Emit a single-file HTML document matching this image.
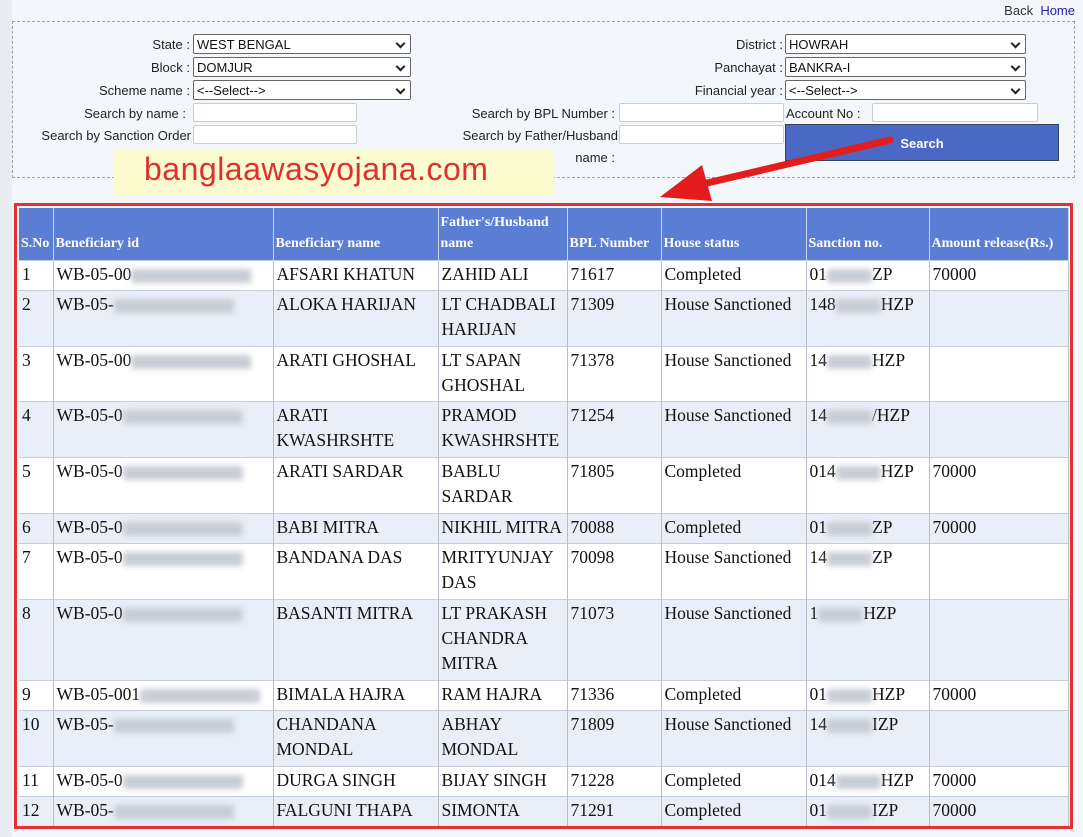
<!DOCTYPE html>
<html><head><meta charset="utf-8"><style>
html,body{margin:0;width:1083px;height:837px;overflow:hidden}
body{background:#f3f6fa;font-family:"Liberation Sans",sans-serif;position:relative}
.a{position:absolute}
.lbl{position:absolute;font-size:13px;color:#222;text-align:right}
.sel{position:absolute;height:20px;border:1px solid #666;border-radius:2px;background:#fff;font-size:13px;line-height:20px;padding-left:3px;box-sizing:border-box;color:#111}
.sel:after{content:"";position:absolute;right:6px;top:5px;width:5px;height:5px;border-right:2px solid #222;border-bottom:2px solid #222;transform:rotate(45deg)}
.inp{position:absolute;height:19px;border:1px solid #ccc;border-radius:2px;background:#fff;box-sizing:border-box}
.wrap{position:absolute;left:0;top:0;width:1083px;height:829px;overflow:hidden}
table{position:absolute;left:19px;top:208px;width:1049px;border-collapse:collapse;font-family:"Liberation Serif",serif;font-size:17.5px;color:#111;table-layout:fixed}
th{background:#5a7ed4;color:#fff;font-family:"Liberation Serif",serif;font-size:14px;font-weight:bold;text-align:left;vertical-align:bottom;padding:0 2px 6px 2px;border-right:1px solid #c8d4ee;height:46px;line-height:21px}
td{vertical-align:top;padding:1px 3px 0 3px;line-height:25px;border-right:1px solid #bbc;border-top:1px solid #c6ccd8;box-sizing:border-box}
tr.o td{background:#fff}
tr.e td{background:#e9eff8}
.bl{display:inline-block;width:120px;height:14px;background:#c8cdd4;filter:blur(3px);vertical-align:middle}
.bs{display:inline-block;width:45px;height:14px;background:#c8cdd4;filter:blur(3px);vertical-align:middle}
</style></head><body>
<div class="a" style="left:0;top:0;width:12px;height:837px;background:#e9ecf0"></div>
<div class="a" style="right:8px;top:3px;font-size:13px"><span style="color:#333">Back</span>&nbsp; <span style="color:#22a">Home</span></div>
<div class="a" style="left:12px;top:21px;width:1063px;height:157px;border:1px dashed #9aa;box-sizing:border-box"></div>
<div class="lbl" style="right:893px;top:37px">State :</div>
<div class="sel" style="left:193px;top:34px;width:218px">WEST BENGAL</div>
<div class="lbl" style="right:893px;top:60px">Block :</div>
<div class="sel" style="left:193px;top:57px;width:218px">DOMJUR</div>
<div class="lbl" style="right:893px;top:83px">Scheme name :</div>
<div class="sel" style="left:193px;top:80px;width:218px">&lt;--Select--&gt;</div>
<div class="lbl" style="right:897px;top:106px">Search by name :</div>
<div class="inp" style="left:193px;top:103px;width:164px"></div>
<div class="lbl" style="right:892px;top:128px">Search by Sanction Order</div>
<div class="inp" style="left:193px;top:125px;width:164px"></div>
<div class="lbl" style="right:300px;top:37px">District :</div>
<div class="sel" style="left:785px;top:34px;width:241px">HOWRAH</div>
<div class="lbl" style="right:300px;top:60px">Panchayat :</div>
<div class="sel" style="left:785px;top:57px;width:241px">BANKRA-I</div>
<div class="lbl" style="right:300px;top:83px">Financial year :</div>
<div class="sel" style="left:785px;top:80px;width:241px">&lt;--Select--&gt;</div>
<div class="lbl" style="right:468px;top:106px">Search by BPL Number :</div>
<div class="inp" style="left:619px;top:103px;width:165px"></div>
<div class="lbl" style="left:786px;top:106px;text-align:left">Account No :</div>
<div class="inp" style="left:872px;top:103px;width:166px"></div>
<div class="lbl" style="right:465px;top:128px">Search by Father/Husband</div>
<div class="inp" style="left:619px;top:125px;width:165px"></div>
<div class="lbl" style="right:468px;top:150px">name :</div>
<div class="a" style="left:785px;top:124px;width:274px;height:37px;background:#4a68c4;border:1px solid #345;box-sizing:border-box;color:#fff;font-weight:bold;font-size:13px;text-align:center;line-height:37px">Search</div>
<div class="a" style="left:114px;top:150px;width:440px;height:46px;background:#fdfbd0"></div>
<div class="a" style="left:144px;top:151px;font-size:32px;color:#e0302e;letter-spacing:0.5px">banglaawasyojana.com</div>
<svg class="a" style="left:650px;top:135px" width="245" height="70"><line x1="240" y1="5" x2="40" y2="52" stroke="#e51c1c" stroke-width="7" stroke-linecap="round"/><polygon points="10,62 52,30 62,66" fill="#e51c1c"/></svg>
<div class="wrap">
<table>
<colgroup><col style="width:34px"><col style="width:220px"><col style="width:165px"><col style="width:129px"><col style="width:94px"><col style="width:145px"><col style="width:123px"><col style="width:139px"></colgroup>
<tr><th>S.No</th><th>Beneficiary id</th><th>Beneficiary name</th><th>Father's/Husband name</th><th>BPL Number</th><th>House status</th><th>Sanction no.</th><th>Amount release(Rs.)</th></tr>
<tr class="o" style="height:30px"><td>1</td><td>WB-05-00<span class="bl"></span></td><td>AFSARI KHATUN</td><td>ZAHID ALI</td><td>71617</td><td>Completed</td><td>01<span class="bs"></span>ZP</td><td>70000</td></tr>
<tr class="e" style="height:56px"><td>2</td><td>WB-05-<span class="bl"></span></td><td>ALOKA HARIJAN</td><td>LT CHADBALI HARIJAN</td><td>71309</td><td>House Sanctioned</td><td>148<span class="bs"></span>HZP</td><td></td></tr>
<tr class="o" style="height:55px"><td>3</td><td>WB-05-00<span class="bl"></span></td><td>ARATI GHOSHAL</td><td>LT SAPAN GHOSHAL</td><td>71378</td><td>House Sanctioned</td><td>14<span class="bs"></span>HZP</td><td></td></tr>
<tr class="e" style="height:56px"><td>4</td><td>WB-05-0<span class="bl"></span></td><td>ARATI KWASHRSHTE</td><td>PRAMOD KWASHRSHTE</td><td>71254</td><td>House Sanctioned</td><td>14<span class="bs"></span>/HZP</td><td></td></tr>
<tr class="o" style="height:56px"><td>5</td><td>WB-05-0<span class="bl"></span></td><td>ARATI SARDAR</td><td>BABLU SARDAR</td><td>71805</td><td>Completed</td><td>014<span class="bs"></span>HZP</td><td>70000</td></tr>
<tr class="e" style="height:30px"><td>6</td><td>WB-05-0<span class="bl"></span></td><td>BABI MITRA</td><td>NIKHIL MITRA</td><td>70088</td><td>Completed</td><td>01<span class="bs"></span>ZP</td><td>70000</td></tr>
<tr class="o" style="height:56px"><td>7</td><td>WB-05-0<span class="bl"></span></td><td>BANDANA DAS</td><td>MRITYUNJAY DAS</td><td>70098</td><td>House Sanctioned</td><td>14<span class="bs"></span>ZP</td><td></td></tr>
<tr class="e" style="height:81px"><td>8</td><td>WB-05-0<span class="bl"></span></td><td>BASANTI MITRA</td><td>LT PRAKASH CHANDRA MITRA</td><td>71073</td><td>House Sanctioned</td><td>1<span class="bs"></span>HZP</td><td></td></tr>
<tr class="o" style="height:30px"><td>9</td><td>WB-05-001<span class="bl"></span></td><td>BIMALA HAJRA</td><td>RAM HAJRA</td><td>71336</td><td>Completed</td><td>01<span class="bs"></span>HZP</td><td>70000</td></tr>
<tr class="e" style="height:56px"><td>10</td><td>WB-05-<span class="bl"></span></td><td>CHANDANA MONDAL</td><td>ABHAY MONDAL</td><td>71809</td><td>House Sanctioned</td><td>14<span class="bs"></span>IZP</td><td></td></tr>
<tr class="o" style="height:30px"><td>11</td><td>WB-05-0<span class="bl"></span></td><td>DURGA SINGH</td><td>BIJAY SINGH</td><td>71228</td><td>Completed</td><td>014<span class="bs"></span>HZP</td><td>70000</td></tr>
<tr class="e" style="height:56px"><td>12</td><td>WB-05-<span class="bl"></span></td><td>FALGUNI THAPA</td><td>SIMONTA THAPA</td><td>71291</td><td>Completed</td><td>01<span class="bs"></span>IZP</td><td>70000</td></tr>
</table>
</div>
<div class="a" style="left:14px;top:203px;width:1059px;height:626px;border:3px solid #e53030;box-sizing:border-box"></div>
</body></html>
